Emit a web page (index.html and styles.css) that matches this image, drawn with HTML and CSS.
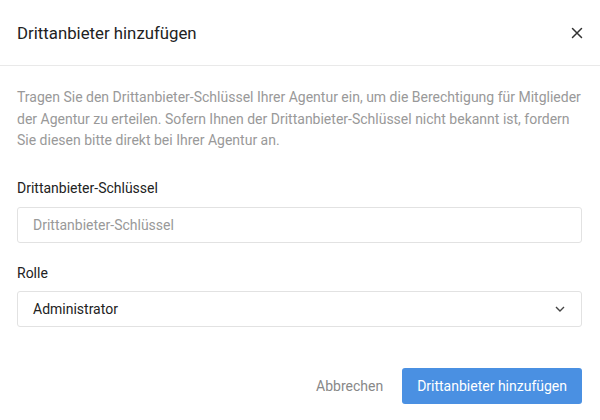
FILE: index.html
```html
<!DOCTYPE html>
<html>
<head>
    <meta charset="utf-8">
    <link rel="stylesheet" href="styles.css">
</head>
<body>
    <div class="modal">
        <div class="modal-header">
            <h1>Drittanbieter hinzufügen</h1>
            <button class="close" type="button" aria-label="Schließen">
                <svg width="12" height="12" viewBox="0 0 12 12"><path d="M1.5 1.5l9 9M10.5 1.5l-9 9" stroke="#333" stroke-width="1.5" stroke-linecap="round"/></svg>
            </button>
        </div>
        <div class="modal-body">
            <p class="hint">Tragen Sie den Drittanbieter-Schlüssel Ihrer Agentur ein, um die Berechtigung für Mitglieder der Agentur zu erteilen. Sofern Ihnen der Drittanbieter-Schlüssel nicht bekannt ist, fordern Sie diesen bitte direkt bei Ihrer Agentur an.</p>
            <div class="field">
                <label for="key">Drittanbieter-Schlüssel</label>
                <input type="text" id="key" placeholder="Drittanbieter-Schlüssel">
            </div>
            <div class="field">
                <label for="role">Rolle</label>
                <div class="select">
                    <span>Administrator</span>
                    <svg width="10" height="6" viewBox="0 0 10 6"><path d="M1 1l4 4 4-4" fill="none" stroke="#444" stroke-width="1.4"/></svg>
                </div>
            </div>
        </div>
        <div class="modal-footer">
            <button type="button" class="btn-link">Abbrechen</button>
            <button type="button" class="btn-primary">Drittanbieter hinzufügen</button>
        </div>
    </div>
</body>
</html>
```

FILE: styles.css
```css
body {
    margin: 0;
    background-color: white;
    font-family: Roboto, "Noto Sans", sans-serif;
    color: #222;
}
.modal {
    width: 600px;
}
.modal-header {
    display: flex;
    align-items: center;
    justify-content: space-between;
    height: 65px;
    padding: 0 18px 0 17px;
    border-bottom: 1px solid #e9e9e9;
}
h1 {
    margin: 0;
    font-size: 16.8px;
    font-weight: normal;
    color: #222;
}
.close {
    background: none;
    border: none;
    padding: 0;
    display: flex;
    margin-right: -1px;
}
.modal-body {
    padding: 21px 18px 0 17px;
}
.hint {
    margin: 0 0 28px 0;
    font-size: 14px;
    line-height: 21.5px;
    color: #999;
}
.field {
    margin-bottom: 22px;
}
.field + .field {
    margin-bottom: 19px;
}
label {
    display: block;
    font-size: 14px;
    color: #222;
    margin-bottom: 11px;
}
.field + .field label {
    margin-bottom: 10px;
}
input[type="text"],
.select {
    box-sizing: border-box;
    width: 100%;
    height: 36px;
    border: 1px solid #e2e2e2;
    border-radius: 3px;
    padding: 0 15px;
    font-family: inherit;
    font-size: 14px;
    color: #222;
    outline: none;
}
input::placeholder {
    color: #999;
}
.select {
    display: flex;
    align-items: center;
    justify-content: space-between;
    padding-right: 16px;
}
.modal-footer {
    display: flex;
    justify-content: flex-end;
    align-items: center;
    gap: 10px;
    padding: 22px 18px 0 17px;
}
.btn-link {
    background: none;
    border: none;
    font-family: inherit;
    font-size: 14px;
    color: #888;
    padding: 0 9px;
}
.btn-primary {
    background-color: #4a90e2;
    color: white;
    border: none;
    border-radius: 3px;
    height: 36px;
    padding: 0 15px;
    font-family: inherit;
    font-size: 14px;
}
```
